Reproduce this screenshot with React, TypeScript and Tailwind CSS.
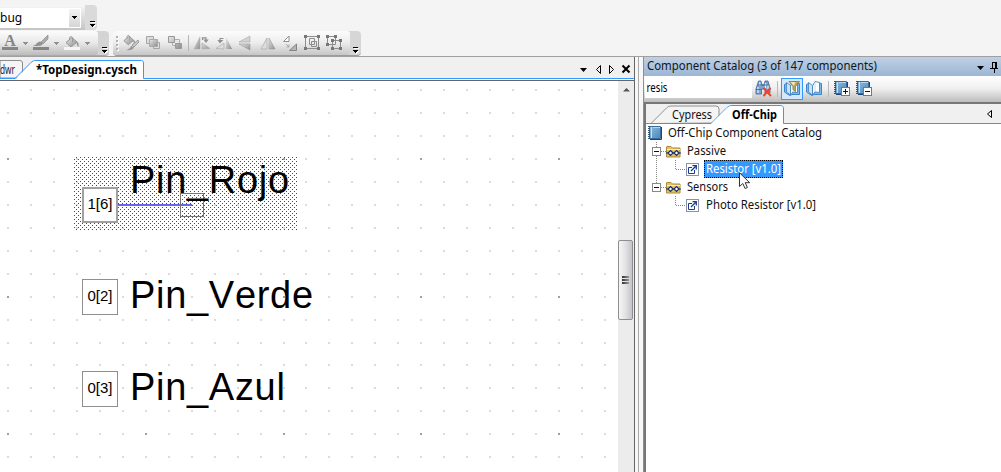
import React from "react";

const grid: { x: number; y: number; major: boolean }[] = [];
for (let i = 0; i < 27; i++) {
  for (let j = 0; j < 17; j++) {
    grid.push({
      x: 7 + 23 * i - (i >= 13 ? 1 : 0),
      y: 8 + 23 * j - (j >= 12 ? 1 : 0),
      major: i % 6 === 0 && j % 6 === 3,
    });
  }
}

function Overflow() {
  return (
    <svg width="7" height="7" viewBox="0 0 7 7" shapeRendering="crispEdges" className="shrink-0">
      <path d="M2 1h5v1h-5zM2 4h5v1h-1v1h-1v1h-1v-1h-1v-1h-1z" fill="#fff" />
      <path d="M1 0h5v1h-5zM1 3h5v1h-1v1h-1v1h-1v-1h-1v-1h-1z" fill="#000" />
    </svg>
  );
}

function Drop({ color = "#8f8f8f" }: { color?: string }) {
  return (
    <svg width="5" height="3" viewBox="0 0 5 3" shapeRendering="crispEdges" className="shrink-0">
      <path d="M0 0h5v1h-1v1h-1v1h-1v-1h-1v-1h-1z" fill={color} />
    </svg>
  );
}

function Glyph({ children, w = 16 }: { children: React.ReactNode; w?: number }) {
  return (
    <svg width={w} height="16" viewBox={`0 0 ${w} 16`} className="shrink-0 overflow-visible">
      <defs>
        <linearGradient id="gg" x1="0" x2="1" y1="0" y2="1">
          <stop offset="0" stopColor="#e8e8e8" />
          <stop offset="1" stopColor="#8c8c8c" />
        </linearGradient>
      </defs>
      {children}
    </svg>
  );
}

function Bucket() {
  return (
    <>
      <path d="M2 7.500L8 2.500L13 7L7 12z" fill="url(#gg)" stroke="#969696" />
      <path d="M5.500 5V2.500Q7 .5 8.500 2.500V7" fill="none" stroke="#999" />
      <path d="M12 6Q15.500 7 14.500 12Q12.500 10 12 6z" fill="#999" />
    </>
  );
}

function TopBars() {
  return (
    <div className="flex h-[57px] shrink-0 flex-col border-b border-[#a0a0a0] bg-[#f4f4f4] pt-[5px]">
      <div className="flex h-[25px] w-[97px] rounded-r-[4px] bg-[#dadada]">
        <div className="flex h-[25px] w-[85px] items-center bg-gradient-to-b from-[#f6f6f6] to-[#c4c4c4]">
          <div className="flex h-[20px] w-[81px] items-center justify-between bg-white">
            <span className="text-[12px] leading-5 text-black">bug</span>
            <span className="mr-px flex h-[18px] w-[11px] items-center justify-center bg-gradient-to-b from-[#f4f4f4] to-[#d5d5d5]">
              <Drop color="#000" />
            </span>
          </div>
        </div>
        <div className="flex w-3 items-end justify-end pb-[2px] pr-px"><Overflow /></div>
      </div>
      <div className="mt-px flex h-[25px] gap-[4px]">
        <div className="flex w-[109px] rounded-r-[4px] border-b border-[#aaa] bg-[#d4d4d4]">
          <div className="flex w-[98px] items-center gap-[5px] rounded-r-[3px] bg-gradient-to-b from-[#fcfcfc] via-[#e8e8e8] to-[#bcbcbc] pl-[2px]">
            <Glyph>
              <text x="8" y="11" textAnchor="middle" fontSize="16" fontWeight="bold" fontFamily="Liberation Serif, serif" fill="#858585">A</text>
              <rect y="12" width="16" height="3" fill="#858585" />
            </Glyph>
            <Drop />
            <Glyph>
              <path d="M15 0L8 7l2 2L15 4z" fill="#aaa" stroke="#909090" strokeWidth=".7" />
              <path d="M0 11Q3 10 4 8Q7 5 9.500 8Q10 11 5 11z" fill="#929292" />
              <rect y="12" width="16" height="3" fill="#858585" />
            </Glyph>
            <Drop />
            <Glyph><Bucket /><rect y="12" width="16" height="3" fill="#f5f5f5" /></Glyph>
            <Drop />
          </div>
          <div className="flex w-[11px] items-end justify-end pb-px pr-px"><Overflow /></div>
        </div>
        <div className="flex w-[248px] rounded-[4px] border-b border-[#9c9c9c] bg-[#d6d6d6]">
          <div className="flex w-[237px] items-center gap-[6px] rounded-[3px] bg-gradient-to-b from-[#fcfcfc] via-[#ececec] to-[#c6c6c6] pl-[3px]">
            <svg width="3" height="16" shapeRendering="crispEdges" className="mr-[-2px] shrink-0">
              {[1, 5, 9, 13].map((y) => (
                <g key={y}><rect x="1" y={y + 1} width="2" height="2" fill="#fff" /><rect y={y} width="2" height="2" fill="#b0b0b0" /></g>
              ))}
            </svg>
            <Glyph>
              <g transform="translate(-1 -1) scale(.9)"><Bucket /></g>
              <path d="M15 5L9 10l2 2 5-5z" fill="#c5c5c5" stroke="#929292" strokeWidth=".8" />
              <path d="M3 15Q7 14 8 11l3 1Q10 16 3 15z" fill="#999" />
            </Glyph>
            <Glyph>
              <path d="M1.500 1.500h7v7h-7z" fill="#ddd" stroke="#a5a5a5" />
              <path d="M8.500 7.500h6v6h-6z" fill="#ddd" stroke="#a5a5a5" />
              <path d="M4.500 4.500h8v7h-8z" fill="url(#gg)" stroke="#aaa" />
            </Glyph>
            <Glyph>
              <path d="M5.500 4.500h7v6h-7z" fill="#e8e8e8" stroke="#b0b0b0" />
              <path d="M1.500 1.500h6v6h-6zM8.500 8.500h6v5h-6z" fill="url(#gg)" stroke="#999" />
            </Glyph>
            <span className="mx-[-1px] h-[16px] w-px shrink-0 bg-[#b5b5b5]" />
            <Glyph>
              <path d="M0 14L6 2V14z" fill="url(#gg)" stroke="#aaa" strokeWidth=".5" />
              <path d="M8 14V8L16 13.500z" fill="url(#gg)" stroke="#aaa" strokeWidth=".7" />
              <path d="M8.500 5V2.800h3.500v3M10.500 5h3L12 7z" fill="none" stroke="#909090" strokeWidth="1.200" />
            </Glyph>
            <Glyph>
              <path d="M0 13.500L8 8V14z" fill="#ddd" stroke="#aaa" strokeWidth=".7" />
              <path d="M10 2L16 14H10z" fill="url(#gg)" />
              <path d="M7.500 3.500H4v3M2.500 5.500L4 7.500l2-2z" fill="none" stroke="#909090" strokeWidth="1.200" />
            </Glyph>
            <Glyph>
              <path d="M12 1V7H1z" fill="#d2d2d2" stroke="#aaa" strokeWidth=".6" />
              <path d="M1 9H12V15z" fill="url(#gg)" stroke="#999" strokeWidth=".6" />
            </Glyph>
            <Glyph>
              <path d="M1 14L7 3V14z" fill="#ddd" stroke="#aaa" strokeWidth=".7" />
              <path d="M9 3l6 11H9z" fill="url(#gg)" stroke="#999" strokeWidth=".6" />
            </Glyph>
            <Glyph>
              <path d="M1.500 6.500L7 1V6.500z" fill="#fff" stroke="#909090" />
              <path d="M7.500 15.500L14.500 9V15.500z" fill="#b5b5b5" stroke="#858585" />
              <path d="M4 9l3 3M7 9.500V12H4.500" fill="none" stroke="#aaa" />
            </Glyph>
            <Glyph>
              <path d="M1.500 1.500h13v12h-13zM5.500 3.500h5v6h-5zM7.500 6.500h5v5h-5z" fill="none" stroke="#8d8d8d" />
              <path d="M0 0h3v3H0zM13 0h3v3h-3zM0 12h3v3H0zM13 12h3v3h-3z" fill="#777" />
            </Glyph>
            <Glyph>
              <path d="M1.500 1.500h8v8h-8zM6.500 5.500h8v8h-8z" fill="none" stroke="#8d8d8d" />
              <path d="M0 0h3v3H0zM8 0h3v3h-3zM0 8h3v3H0zM5 4h3v3h-3zM13 4h3v3h-3zM5 12h3v3h-3zM13 12h3v3h-3z" fill="#777" />
            </Glyph>
          </div>
          <div className="flex w-[11px] items-end justify-end pb-px pr-[2px]"><Overflow /></div>
        </div>
      </div>
    </div>
  );
}

function PinRow({ code, name, className }: { code: string; name: string; className: string }) {
  return (
    <div className={`absolute left-[82px] flex h-[36px] items-start ${className}`}>
      <div className="flex h-[36px] w-[36px] items-center justify-center border border-[#8f8f8f] bg-white pb-px text-[15px]">{code}</div>
      <span className="ml-[12px] mt-[-3px] whitespace-pre text-[38px] leading-[38px] tracking-[0.7px] [font-kerning:none]">{name}</span>
    </div>
  );
}

function Canvas() {
  return (
    <div className="relative min-w-0 flex-1 overflow-hidden bg-white font-['Liberation_Sans',Arial,sans-serif] text-black">
      <svg width="618" height="391" shapeRendering="crispEdges" className="absolute left-0 top-0">
        <defs>
          <pattern id="hatch" x="74" y="76" width="4" height="4" patternUnits="userSpaceOnUse">
            <rect x="2" width="1" height="1" fill="#008000" />
            <rect y="2" width="1" height="1" fill="#008000" />
          </pattern>
        </defs>
        {grid.map((p, k) => (
          <rect key={k} x={p.x} y={p.y} width="2" height="2" fill={p.major ? "#a0a0a0" : "#dcdcdc"} />
        ))}
        <rect x="74" y="76" width="223" height="73" fill="url(#hatch)" />
        <rect x="118" y="123" width="74" height="2" fill="#6666f0" />
        <rect x="180.500" y="112.500" width="23" height="23" fill="none" stroke="#777" />
      </svg>
      <div className="absolute left-[82px] top-[106px] flex h-[36px] w-[36px] items-center justify-center border-2 border-[#a0a0a0] bg-white pb-px text-[15px]">1[6]</div>
      <span className="absolute left-[130px] top-[80px] whitespace-pre text-[38px] leading-[38px] tracking-[0.7px] [font-kerning:none]">Pin_Rojo</span>
      <PinRow code="0[2]" name="Pin_Verde" className="top-[198px]" />
      <PinRow code="0[3]" name="Pin_Azul" className="top-[290px]" />
    </div>
  );
}

function Editor() {
  return (
    <div className="flex w-[635px] shrink-0 flex-col border-r border-[#666]">
      <div className="flex h-[24px] shrink-0 justify-between border-b border-[#666] bg-[#f0f0f0]">
        <svg width="618" height="23" className="shrink-0 text-black">
          <path d="M0 3.500H20Q22.500 3.500 22.500 6V21H0z" fill="#f5f5f5" stroke="#8c8c8c" />
          <text x="0" y="17" fontSize="12" textLength="15" lengthAdjust="spacingAndGlyphs" fill="#1a1a50">dwr</text>
          <rect y="22" width="618" height="1" fill="#fff" />
          <path d="M0 21.500H15L31 5.500Q33 3.500 36 3.500H141.500Q143.500 3.500 143.500 6V21.500H618" fill="none" stroke="#3399ff" />
          <path d="M15 23L31.500 6Q33 4 36 4H141Q143 4 143 6V23z" fill="#fff" />
          <text x="36" y="17" fontSize="12" fontWeight="bold" textLength="101" lengthAdjust="spacingAndGlyphs">*TopDesign.cysch</text>
          <path d="M580 11h7l-3.500 4z" />
          <path d="M600.500 8.500v8l-4-4zM609.500 8.500v8l4-4z" fill="none" stroke="#000" />
        </svg>
        <svg width="16" height="23" className="shrink-0">
          <rect y="21" width="16" height="1" fill="#3399ff" />
          <rect y="22" width="16" height="1" fill="#fff" />
          <path d="M4.500 8.500l7 7M11.500 8.500l-7 7" stroke="#000" strokeWidth="2" />
        </svg>
      </div>
      <div className="flex min-h-0 flex-1">
        <Canvas />
        <div className="flex w-[16px] shrink-0 flex-col bg-[#ececec]">
          <svg width="16" height="159" className="shrink-0">
            <path d="M5 10.500L8.500 7L12 10.500z" fill="#555" />
          </svg>
          <div className="flex h-[80px] w-[15px] flex-col items-center justify-center gap-px rounded-[2px] border border-[#8e8e8e] bg-gradient-to-r from-[#f6f6f6] via-[#e2e2e4] to-[#c4c4cc]">
            <i className="h-[2px] w-[7px] bg-gradient-to-r from-[#333] to-[#999]" />
            <i className="h-[2px] w-[7px] bg-gradient-to-r from-[#333] to-[#999]" />
            <i className="h-[2px] w-[7px] bg-gradient-to-r from-[#333] to-[#999]" />
          </div>
        </div>
      </div>
    </div>
  );
}

function Book({ sign }: { sign?: string }) {
  return (
    <svg width="17" height="17" viewBox="0 0 17 17" className="shrink-0">
      <defs>
        <linearGradient id="bk" x1="0" x2="1" y1="0" y2="1">
          <stop offset="0" stopColor="#8fbde0" /><stop offset="1" stopColor="#4a86ba" />
        </linearGradient>
      </defs>
      <path d="M1.500 1.500h11v12h-11z" fill="url(#bk)" stroke="#3c6c9b" />
      <path d="M3.500 2v11" stroke="#c8e2f5" />
      <path d="M5 2.500h7" stroke="#b5d6ef" />
      <path d="M1 1v13" stroke="#35536f" strokeWidth="2" strokeDasharray="1 1" />
      <path d="M2 14.500h11.500V2" fill="none" stroke="#1d4470" />
      {sign && (
        <g shapeRendering="crispEdges">
          <rect x="7.500" y="7.500" width="8" height="8" fill="#fff" stroke="#777" />
          <path d={sign === "+" ? "M9 11h5v1h-5zM11 9h1v5h-1z" : "M9 11h5v1h-5z"} fill="#111" />
        </g>
      )}
    </svg>
  );
}

function OpenBook({ filter }: { filter?: boolean }) {
  return (
    <svg width="16" height="17" viewBox="0 0 16 17" className="shrink-0">
      <path d="M.5 4.500L3 3L8 13L13 3L15.500 3.500V14.500H8L6 15.500L2.500 13.500L.5 12z" fill="#7db8ea" stroke="#3d83c8" />
      <path d="M2.500 2.500L6.500 5.500V15L2.500 12z" fill="#c9e2f8" stroke="#3f83c2" strokeWidth=".8" />
      <path d="M6.500 6L9 1.500L13.500 2.500V12.500L9 12L6.500 15z" fill="#fff" stroke="#3f83c2" strokeWidth=".9" />
      <path d="M9 2v10" stroke="#a9cdec" strokeWidth=".7" />
      {filter && <path d="M5 1.500h10.500L11.500 6.500v5L9 9.500v-3z" fill="#bba65a" stroke="#80702e" strokeWidth=".7" />}
      {filter && <path d="M6.500 2h5L9.800 6z" fill="#efe5b5" />}
    </svg>
  );
}

function Folder() {
  return (
    <svg width="15" height="13" viewBox="0 0 15 13" className="shrink-0">
      <path d="M.5 2Q.5 1.500 1 1.500H5L6.500 3H14V12H.5z" fill="#e5c15f" stroke="#a88b43" />
      <path d="M1 4.500H14" stroke="#fff0b5" />
      <path d="M4.500 5.500L7 8l-2.500 2.500L2 8zM10.500 5.500L13 8l-2.500 2.500L8 8z" fill="#fff" stroke="#172f6d" strokeWidth="1.200" />
      <path d="M0 8h2M7 8h1M13 8h2" stroke="#172f6d" />
    </svg>
  );
}

function PartIcon() {
  return (
    <svg width="13" height="13" viewBox="0 0 13 13" className="shrink-0">
      <rect x=".5" y=".5" width="12" height="12" fill="#fff" stroke="#8794a8" />
      <path d="M6 4.500H2.500v6H8.500V7" fill="none" stroke="#1a3d91" />
      <path d="M5 8l4.500-4.500M6.500 2.700h3.800v3.800" fill="none" stroke="#1a3d91" strokeWidth="1.300" />
    </svg>
  );
}

function Branch({ last, label }: { last?: boolean; label: string }) {
  return (
    <div className="flex h-[18px] items-center pl-[5px]">
      <svg width="15" height="18" shapeRendering="crispEdges" className="shrink-0">
        <path d={last ? "M5.500 0v5" : "M5.500 0v18"} stroke="#888" strokeDasharray="1 1" />
        <path d="M10 9.500h5" stroke="#888" strokeDasharray="1 1" />
        <rect x="1.500" y="5.500" width="8" height="8" fill="#fff" stroke="#888" />
        <path d="M3 9h5v1H3z" fill="#111" />
      </svg>
      <Folder />
      <Label text={label} width={label === "Passive" ? 39 : 41} gap={6} />
    </div>
  );
}

function Label({ text, width, white, gap = 5 }: { text: string; width: number; white?: boolean; gap?: number }) {
  return (
    <svg width={width + gap} height="18" className="shrink-0 overflow-visible">
      <text x={gap} y="13" fontSize="12" textLength={width} lengthAdjust="spacingAndGlyphs" fill={white ? "#fff" : "#111"}>{text}</text>
    </svg>
  );
}

function Leaf({ line, children }: { line?: boolean; children: React.ReactNode }) {
  return (
    <div className="flex h-[18px] items-center pl-[5px]">
      <svg width="35" height="18" shapeRendering="crispEdges" className="shrink-0">
        {line && <path d="M5.500 0v18" stroke="#888" strokeDasharray="1 1" />}
        <path d="M24.500 0v9.500h10" fill="none" stroke="#888" strokeDasharray="1 1" />
      </svg>
      <PartIcon />
      {children}
    </div>
  );
}

function Catalog() {
  return (
    <div className="flex min-w-0 flex-1 flex-col border-l border-[#8f8f8f] bg-white">
      <div className="flex h-[19px] shrink-0 bg-gradient-to-b from-[#c0d0e4] to-[#9bb6d4]">
        <svg width="357" height="19" className="shrink-0">
          <text x="3" y="13" fontSize="12" textLength="230" lengthAdjust="spacingAndGlyphs" fill="#101820">Component Catalog (3 of 147 components)</text>
          <path d="M333 9h7l-3.500 4z" />
          <path d="M348 5.500h5M348.500 5v6M346 11.500h8M350.500 12v4" stroke="#000" />
          <path d="M352 5v6" stroke="#000" strokeWidth="2" />
        </svg>
      </div>
      <div className="flex h-[26px] shrink-0 bg-gradient-to-b from-white via-[#eeeeee] to-[#bdbdbd] pl-px">
        <div className="h-[22px] w-[107px] shrink-0 bg-white">
          <svg width="107" height="22"><text y="16" x="1.500" fontSize="12" textLength="21" lengthAdjust="spacingAndGlyphs">resis</text></svg>
        </div>
        <div className="flex h-[25px] items-center">
          <svg width="17" height="17" viewBox="0 0 17 17" className="ml-[3px] shrink-0">
            <path d="M3.500 1h2.500l1 4h2l1-4h3l2 7v5h-5V9H6.500v5H1V9z" fill="#7ea3cf" stroke="#3d6295" strokeWidth=".8" />
            <path d="M3 7v6M10.500 3v5M4.800 2v4M13 5v4" stroke="#dceaf8" strokeWidth="1.300" />
            <path d="M1 9.500h5.500M3 5h11" stroke="#34598b" strokeWidth=".8" />
            <path d="M8.500 8l7.500 8M15.500 8L8.500 16" stroke="#e8472c" strokeWidth="2" />
          </svg>
          <span className="ml-[5px] h-[16px] w-px bg-[#b9b9b9]" />
          <div className="ml-[3px] flex h-[22px] w-[22px] items-center justify-center border border-[#3399ff] bg-[#d3e8fb]"><OpenBook filter /></div>
          <div className="ml-[3px]"><OpenBook /></div>
          <span className="ml-[6px] mr-[5px] h-[16px] w-px bg-[#b9b9b9]" />
          <Book sign="+" />
          <span className="w-[5px]" />
          <Book sign="-" />
        </div>
      </div>
      <div className="flex min-h-0 flex-1 flex-col border-l-2 border-t-2 border-[#777]">
        <svg width="355" height="20" className="shrink-0 bg-[#f0f0f0]">
          <path d="M5 19.500L21 3.500Q22.500 2 25 2H70Q73 2 73 5V19z" fill="#f4f4f4" stroke="#909090" />
          <path d="M0 19.500H65L80.500 4Q83 1.500 86 1.500H134Q137.500 1.500 137.500 4V19.500H355" fill="none" stroke="#3399ff" />
          <path d="M65 20L81 4Q83 2 86 2H134Q137 2 137 4V20z" fill="#fff" />
          <text x="26" y="15" fontSize="12" textLength="40" lengthAdjust="spacingAndGlyphs" fill="#111">Cypress</text>
          <text x="86" y="15" fontSize="12" fontWeight="bold" textLength="45" lengthAdjust="spacingAndGlyphs">Off-Chip</text>
          <path d="M345.500 6.500v7l-4-3.500z" fill="none" stroke="#000" />
        </svg>
        <div className="flex flex-col">
          <div className="flex h-[18px] items-center pl-[2px]">
            <Book />
            <Label text="Off-Chip Component Catalog" width={154} gap={3} />
          </div>
          <Branch label="Passive" />
          <Leaf line>
            <div className="relative ml-[5px] flex h-[18px] w-[79px] items-center border border-dotted border-black bg-[#3399ff]">
              <Label text="Resistor [v1.0]" width={75} white gap={1} />
              <svg width="13" height="18" viewBox="0 0 13 18" className="absolute left-[34px] top-[11px]">
                <path d="M.5.8V14.500l3.300-3 2.300 5 2.300-1-2.200-4.800h4.500z" fill="#fff" stroke="#333" />
              </svg>
            </div>
          </Leaf>
          <Branch label="Sensors" last />
          <Leaf><Label text="Photo Resistor [v1.0]" width={110} gap={7} /></Leaf>
        </div>
      </div>
    </div>
  );
}

export default function App() {
  return (
    <div className="flex h-[472px] w-[1001px] flex-col overflow-hidden bg-[#f4f4f4] font-['Noto_Sans',sans-serif] text-black">
      <TopBars />
      <div className="flex min-h-0 flex-1">
        <Editor />
        <div className="flex w-[8px] shrink-0 bg-[#f7f7f7] pl-[3px]"><span className="w-px bg-[#aaa]" /></div>
        <Catalog />
      </div>
    </div>
  );
}
